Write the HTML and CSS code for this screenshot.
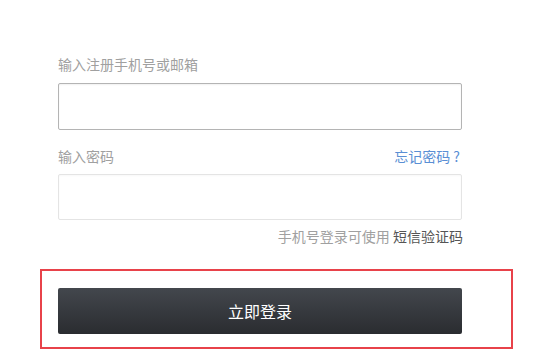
FILE: index.html
```html
<!DOCTYPE html>
<html lang="zh-CN">
<head>
<meta charset="utf-8">
<title>登录</title>
<link rel="stylesheet" href="styles.css">
</head>
<body>
<form class="login">
  <div class="label-row"><span class="label">输入注册手机号或邮箱</span></div>
  <div class="field field-active"></div>
  <div class="label-row label-row-2">
    <span class="label">输入密码</span>
    <a class="link" href="#">忘记密码 ?</a>
  </div>
  <div class="field field-idle"></div>
  <div class="hint">手机号登录可使用 <span class="hint-strong">短信验证码</span></div>
  <div class="highlight">
    <button type="button" class="submit">立即登录</button>
  </div>
</form>
</body>
</html>
```
FILE: styles.css
```css
html, body {
  margin: 0;
  padding: 0;
  background: #ffffff;
}
body {
  font-family: "Noto Sans CJK SC", "Noto Sans", sans-serif;
  color: #999;
}
.login {
  width: 404px;
  padding: 54px 0 0 58px;
  display: flex;
  flex-direction: column;
}
.label-row {
  display: flex;
  justify-content: space-between;
  align-items: center;
  height: 20px;
  line-height: 20px;
  font-size: 14px;
  margin-bottom: 9px;
}
.label-row-2 {
  margin-top: 16px;
  margin-bottom: 8px;
}
.label {
  color: #a0a0a0;
}
.link {
  color: #5a8fd4;
  text-decoration: none;
  margin-right: 2px;
}
.field {
  box-sizing: border-box;
  width: 404px;
  background: #fff;
}
.field-active {
  height: 47px;
  border: 1px solid #b4b4b4;
  border-radius: 2px;
  box-shadow: inset 0 1px 2px rgba(0,0,0,0.06);
}
.field-idle {
  height: 46px;
  border: 1px solid #e4e4e4;
  border-radius: 2px;
  box-shadow: inset 0 1px 2px rgba(0,0,0,0.03);
}
.hint {
  margin-top: 6px;
  height: 20px;
  line-height: 20px;
  text-align: right;
  font-size: 14px;
  color: #a0a0a0;
  margin-right: -1px;
}
.hint-strong {
  color: #555;
}
.highlight {
  margin: 23px 0 0 -18px;
  border: 2px solid #e8424a;
  padding: 17px 49px 13px 16px;
  box-sizing: border-box;
  width: 473px;
}
.submit {
  display: block;
  width: 404px;
  height: 46px;
  border: none;
  border-radius: 2px;
  background: linear-gradient(#43474d, #2a2c30);
  color: #fff;
  font-family: "Noto Sans CJK SC", "Noto Sans", sans-serif;
  font-size: 16px;
  padding: 0;
  cursor: pointer;
}
```
